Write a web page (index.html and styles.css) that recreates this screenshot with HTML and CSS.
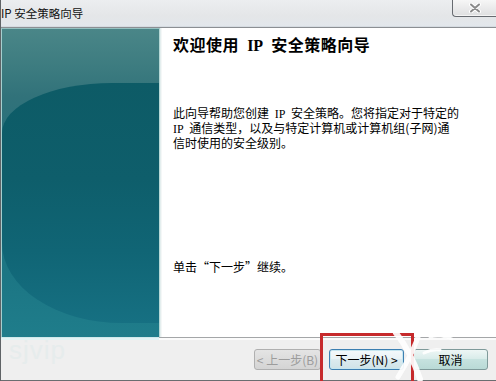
FILE: index.html
```html
<!DOCTYPE html>
<html lang="zh-CN">
<head>
<meta charset="utf-8">
<title>IP 安全策略向导</title>
<link rel="stylesheet" href="styles.css">
</head>
<body>
<div class="window">
  <div class="titlebar">
    <span class="title">IP 安全策略向导</span>
    <div class="close">
      <svg width="12" height="10" viewBox="0 0 12 10">
        <path d="M2 1.5 L10 8.5 M10 1.5 L2 8.5" stroke="#ffffff" stroke-width="4" stroke-linecap="round"/>
        <path d="M2 1.5 L10 8.5 M10 1.5 L2 8.5" stroke="#8a8a8a" stroke-width="2" stroke-linecap="round"/>
      </svg>
    </div>
  </div>
  <div class="main">
    <div class="side"></div>
    <div class="content">
      <h1 class="heading">欢迎使用 <span class="lat">IP</span> 安全策略向导</h1>
      <p class="desc">此向导帮助您创建 <span class="lat">IP</span> 安全策略。您将指定对于特定的<br><span class="lat">IP</span> 通信类型，以及与特定计算机或计算机组(子网)通<br>信时使用的安全级别。</p>
      <p class="hint">单击“下一步”继续。</p>
    </div>
  </div>
  <div class="footer">
    <span class="watermark">sjvip</span>
    <button class="btn btn-back" disabled>&lt; 上一步(B)</button>
    <button class="btn btn-next">下一步(N) &gt;</button>
    <button class="btn btn-cancel">取消</button>
    <div class="highlight"></div>
    <svg class="brush" width="70" height="56" viewBox="0 0 70 56">
      <path d="M6 6 C14 16 22 28 30 52" stroke="#ffffff" stroke-width="6" fill="none" stroke-linecap="round"/>
      <path d="M30 4 C26 18 18 34 8 50" stroke="#ffffff" stroke-width="5" fill="none" stroke-linecap="round"/>
      <path d="M34 26 C38 24 44 22 50 23" stroke="#ffffff" stroke-width="3" fill="none" stroke-linecap="round"/>
      <path d="M40 10 C46 8 56 9 62 12" stroke="#ffffff" stroke-width="3" fill="none" stroke-linecap="round"/>
    </svg>
  </div>
</div>
</body>
</html>
```
FILE: styles.css
```css
* { box-sizing: border-box; }
html, body {
  margin: 0;
  padding: 0;
}
body {
  width: 496px;
  height: 381px;
  overflow: hidden;
  background: #ffffff;
  font-family: "Noto Sans CJK SC", "Liberation Sans", sans-serif;
  color: #000;
}
.window {
  position: relative;
  width: 496px;
  height: 381px;
  display: flex;
  flex-direction: column;
  border-left: 1px solid #5f6366;
}
.titlebar {
  height: 28px;
  flex: none;
  display: flex;
  align-items: flex-start;
  justify-content: space-between;
  background: linear-gradient(#eceef0, #e4e6e8 60%, #e2e7ec);
  border-bottom: 1px solid #8b8f93;
  box-shadow: inset 0 -1px 0 #d5dbe1;
}
.title {
  font-size: 11.5px;
  line-height: 14px;
  padding-top: 6px;
  color: #111;
}
.close {
  width: 44px;
  height: 17px;
  border: 1px solid #676b70;
  border-top: none;
  border-right: none;
  border-radius: 0 0 0 4px;
  background: linear-gradient(#f6f6f6, #dedfe0);
  box-shadow: inset 0 -1px 0 #f4f4f4;
  display: flex;
  align-items: center;
  justify-content: center;
}
.main {
  flex: 1;
  display: flex;
  min-height: 0;
}
.side {
  position: relative;
  overflow: hidden;
  width: 159px;
  flex: none;
  border-left: 1px solid #a7cfcf;
  border-top: 1px solid #94c0c0;
  border-right: 1px solid #b6d8d6;
  box-shadow: 1px 0 0 #e4eeee, 2px 0 0 #f4f7f7;
  background: linear-gradient(#4a8688 0, #3d7c80 12%, #31727a 22%, #22707c 50%, #1c7684 80%, #1f7d8b 100%);
}
.side::before {
  content: "";
  position: absolute;
  left: 0;
  top: 54px;
  width: 330px;
  height: 240px;
  border-radius: 110px 0 0 120px / 50px 0 0 80px;
  background: linear-gradient(#0d5b66 0, #0e5e6b 40%, #106575 70%, #167082 100%);
}
.content {
  flex: 1;
  padding: 6px 0 0 13px;
}
.heading {
  margin: 0;
  font-size: 16px;
  line-height: 20px;
  font-weight: bold;
  letter-spacing: 0.5px;
  word-spacing: 4px;
}
.lat {
  font-family: "Liberation Serif", serif;
  letter-spacing: 0;
}
.desc {
  margin: 50px 0 0;
  font-size: 12px;
  line-height: 13px;
  word-spacing: 3px;
}
.hint {
  margin: 111px 0 0;
  font-size: 12px;
  line-height: 13px;
}
.footer {
  position: relative;
  height: 44px;
  flex: none;
  display: flex;
  align-items: flex-start;
  justify-content: flex-end;
  gap: 8px;
  padding: 12px 8px 0 0;
  border-bottom: 1px solid #6a6d70;
  background:
    linear-gradient(to right, #cfeaec 158px, #a4a6a8 158px) 0 0 / 100% 1px no-repeat,
    linear-gradient(to right, #e2f4f5 158px, #fbfbfb 158px) 0 1px / 100% 2px no-repeat,
    #efefef;
}
.watermark {
  position: absolute;
  left: 8px;
  top: -1px;
  font-family: "Liberation Sans", sans-serif;
  font-size: 26px;
  line-height: 28px;
  color: #e6ecec;
  letter-spacing: 1px;
}
.btn {
  height: 21px;
  width: 75px;
  padding: 0;
  font-family: "Noto Sans CJK SC", "Liberation Sans", sans-serif;
  font-size: 12px;
  line-height: 17px;
  border: 1px solid #707070;
  border-radius: 3px;
  background: linear-gradient(#f3f3f3 0, #ebebeb 45%, #dcdcdc 50%, #d0d0d0 100%);
  color: #000;
}
.btn-back {
  width: 67px;
  color: #9c9c9c;
  border-color: #b0b0b0;
  background: linear-gradient(#e4e4e4, #d4d4d4);
}
.btn-next {
  border-color: #3c7fb1;
  background: linear-gradient(#f4f9fb 0, #eaf3f6 45%, #dcebef 50%, #cfe3e8 100%);
  box-shadow: inset 0 0 0 1px #c6e6f0;
}
.btn-cancel {
  margin-left: 1px;
  border-color: #7f9a9a;
  background: linear-gradient(#eef6f5 0, #d9ecea 45%, #c6e2df 50%, #b9dad6 100%);
}
.highlight {
  position: absolute;
  left: 319px;
  top: -4px;
  width: 94px;
  height: 52px;
  border: 3px solid #c62a2c;
}
.brush {
  position: absolute;
  left: 389px;
  top: -10px;
  opacity: 0.92;
}
```
